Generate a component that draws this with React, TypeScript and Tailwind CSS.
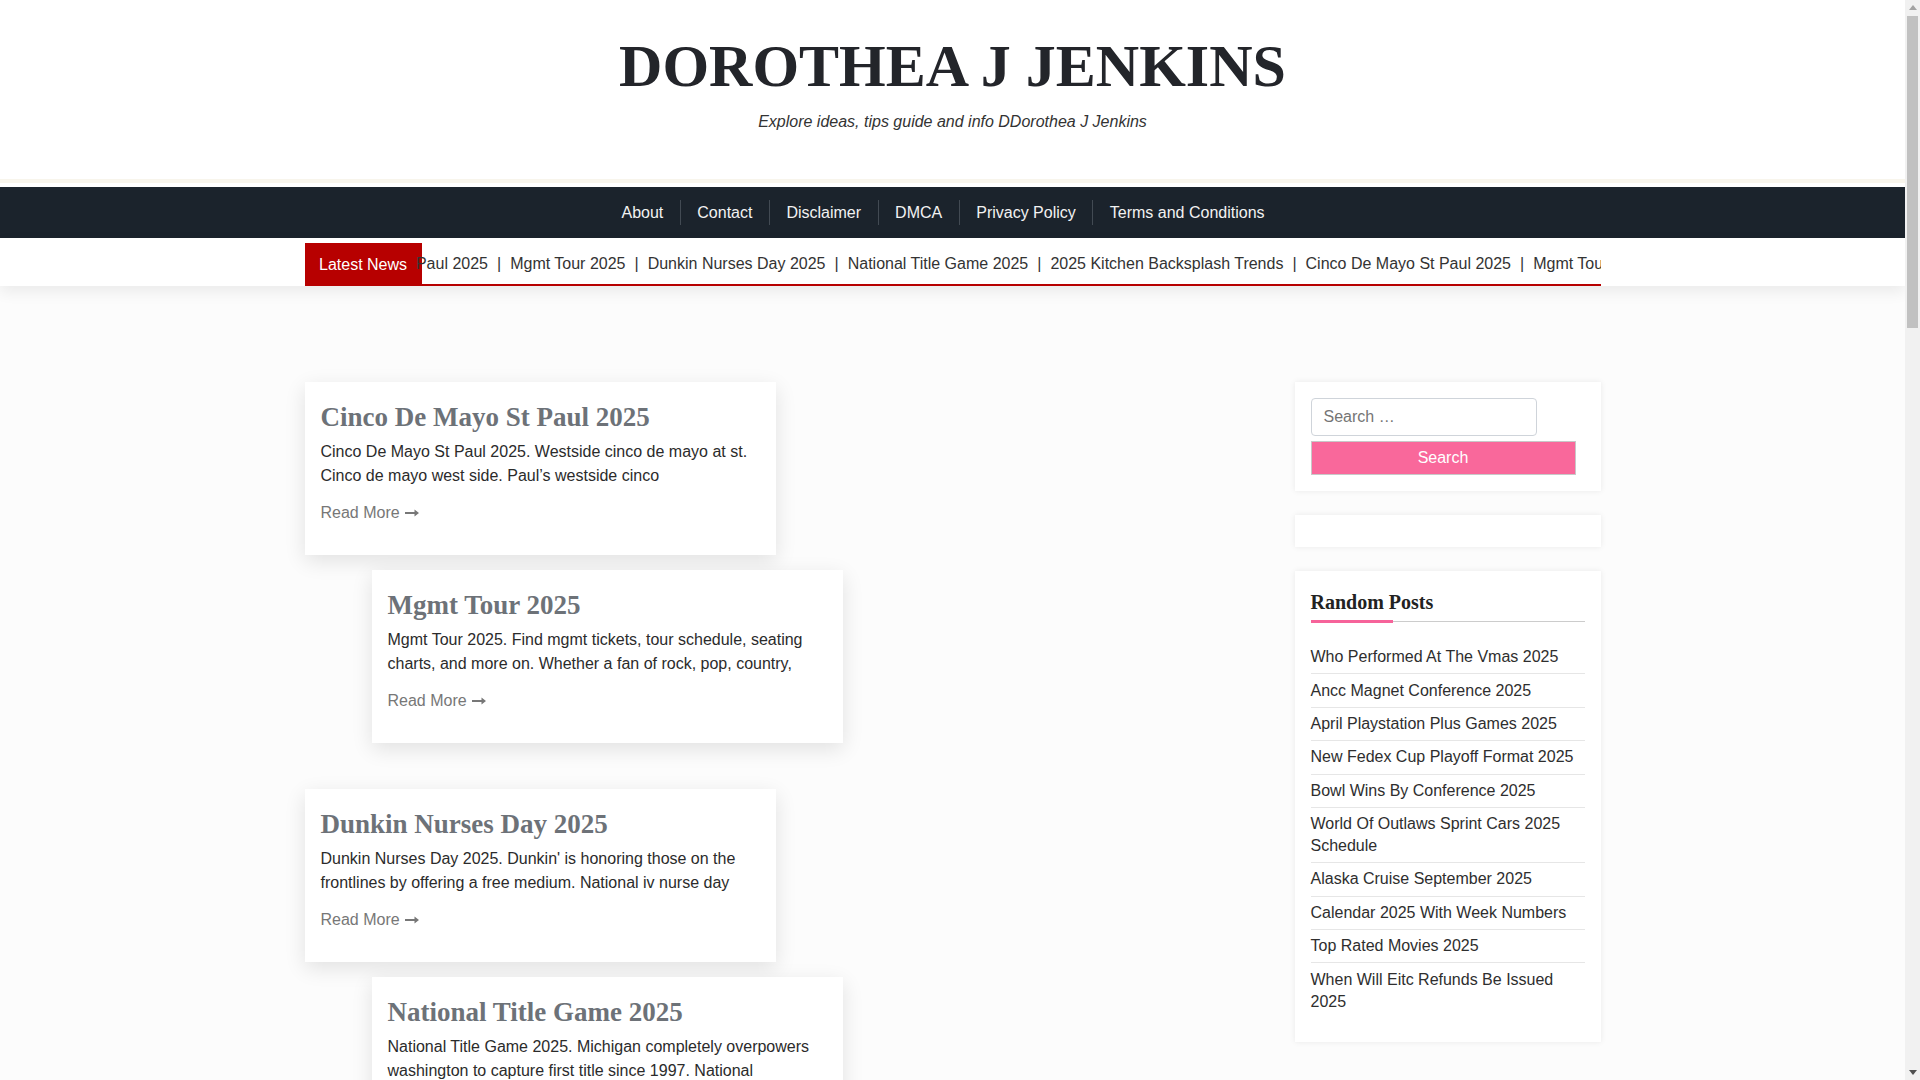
import React from "react";

const posts = [
  {
    title: "Cinco De Mayo St Paul 2025",
    excerpt:
      "Cinco De Mayo St Paul 2025. Westside cinco de mayo at st. Cinco de mayo west side. Paul’s westside cinco",
  },
  {
    title: "Mgmt Tour 2025",
    excerpt:
      "Mgmt Tour 2025. Find mgmt tickets, tour schedule, seating charts, and more on. Whether a fan of rock, pop, country,",
  },
  {
    title: "Dunkin Nurses Day 2025",
    excerpt:
      "Dunkin Nurses Day 2025. Dunkin' is honoring those on the frontlines by offering a free medium. National iv nurse day",
  },
  {
    title: "National Title Game 2025",
    excerpt:
      "National Title Game 2025. Michigan completely overpowers washington to capture first title since 1997. National",
  },
  {
    title: "2025 Kitchen Backsplash Trends",
    excerpt:
      "2025 Kitchen Backsplash Trends. Discover the latest tile ideas, colors and materials for your kitchen. From",
  },
  {
    title: "Who Performed At The Vmas 2025",
    excerpt:
      "Who Performed At The Vmas 2025. See the full list of artists who took the stage at the awards show. The",
  },
];

const randomPosts = [
  "Who Performed At The Vmas 2025",
  "Ancc Magnet Conference 2025",
  "April Playstation Plus Games 2025",
  "New Fedex Cup Playoff Format 2025",
  "Bowl Wins By Conference 2025",
  "World Of Outlaws Sprint Cars 2025 Schedule",
  "Alaska Cruise September 2025",
  "Calendar 2025 With Week Numbers",
  "Top Rated Movies 2025",
  "When Will Eitc Refunds Be Issued 2025",
];

const ticker = [
  "Cinco De Mayo St Paul 2025",
  "Mgmt Tour 2025",
  "Dunkin Nurses Day 2025",
  "National Title Game 2025",
  "2025 Kitchen Backsplash Trends",
  "Cinco De Mayo St Paul 2025",
  "Mgmt Tour 2025",
  "Dunkin Nurses Day 2025",
];

const menu = ["About", "Contact", "Disclaimer", "DMCA", "Privacy Policy", "Terms and Conditions"];

function Arrow() {
  return (
    <svg width="14" height="8" viewBox="0 0 14 8" className="ml-[5px] inline-block" fill="#777">
      <path d="M0 3h9.5V0.6L14 4l-4.5 3.4V5H0z" />
    </svg>
  );
}

function Card({ title, excerpt, shifted, first, gapSmall }: { title: string; excerpt: string; shifted: boolean; first: boolean; gapSmall: boolean }) {
  return (
    <article
      className={`${shifted ? "ml-[67px]" : "ml-0"} ${first ? "mt-0" : gapSmall ? "mt-[15px]" : "mt-[46px]"} w-[471px] bg-white px-[16px] pt-[19px] pb-[30px] shadow-[0_6px_20px_rgba(0,0,0,0.11)]`}
    >
      <h2 className="font-['Liberation_Serif',serif] text-[27px] font-bold leading-[1.2] text-[#6d7278] mb-[7px]">
        {title}
      </h2>
      <p className="text-[16px] leading-[23.3px] text-[#2b2b2b] mb-[14px]">{excerpt}</p>
      <a className="flex items-center text-[16px] leading-[24px] text-[#777]">
        Read More
        <Arrow />
      </a>
    </article>
  );
}

function Scrollbar() {
  return (
    <div className="flex h-full w-[15px] shrink-0 flex-col items-center bg-[#f1f1f1]">
      <div className="flex h-[15px] w-full items-center justify-center">
        <svg width="8" height="5" viewBox="0 0 8 5" fill="#a3a3a3">
          <path d="M4 0L8 5H0z" />
        </svg>
      </div>
      <div className="mt-[1px] h-[312px] w-[11px] bg-[#c1c1c1]" />
      <div className="flex-1" />
      <div className="flex h-[15px] w-full items-center justify-center">
        <svg width="8" height="5" viewBox="0 0 8 5" fill="#505050">
          <path d="M0 0H8L4 5z" />
        </svg>
      </div>
    </div>
  );
}

export default function App() {
  return (
    <div className="flex h-screen overflow-hidden font-['Liberation_Sans',Arial,sans-serif]">
      <div className="min-w-0 flex-1 overflow-hidden bg-[#fcfcfc]">
        {/* Header */}
        <header className="bg-white pt-[30px] pb-[45px] text-center">
          <h1 className="font-['Liberation_Serif',serif] text-[60px] font-bold leading-[1.2] text-[#23252a]">
            DOROTHEA J JENKINS
          </h1>
          <p className="mt-[8px] text-[16px] italic leading-[24px] text-[#333]">
            Explore ideas, tips guide and info DDorothea J Jenkins
          </p>
        </header>
        <div className="h-[4px] bg-[#f8f5ec]" />
        <div className="h-[4px] bg-white" />

        {/* Nav */}
        <nav className="flex h-[51px] items-center justify-center bg-[#1b232c]">
          <ul className="mr-[19px] flex items-center">
            {menu.map((m, i) => (
              <li
                key={m}
                className={`flex h-[25px] items-center px-[16.5px] text-[16px] text-[#f2f2f2] ${
                  i < menu.length - 1 ? "border-r border-[#424a53]" : ""
                }`}
              >
                {m}
              </li>
            ))}
          </ul>
        </nav>

        {/* Ticker */}
        <div className="bg-white pt-[5px] shadow-[0_6px_14px_rgba(0,0,0,0.07)]">
          <div className="mx-auto flex w-[1296px]">
            <div className="flex h-[43px] shrink-0 items-center whitespace-nowrap bg-[#b70000] px-[14.5px] text-[16px] text-white">
              Latest News
            </div>
            <div className="relative ml-[-5px] flex h-[43px] flex-1 items-center overflow-hidden border-b-[2px] border-[#b70000]">
              <div className="ml-[-134px] flex whitespace-nowrap text-[16px] text-[#333]">
                {ticker.map((t, i) => (
                  <span key={i} className="flex">
                    {i > 0 && <span className="mx-[9px]">|</span>}
                    <span>{t}</span>
                  </span>
                ))}
              </div>
            </div>
          </div>
        </div>

        {/* Main */}
        <main className="mx-auto flex w-[1296px] items-start justify-between pt-[96px] pb-[80px]">
          <div className="flex flex-col">
            {posts.map((p, i) => (
              <Card
                key={i}
                title={p.title}
                excerpt={p.excerpt}
                shifted={i % 2 === 1}
                first={i === 0}
                gapSmall={i % 2 === 1}
              />
            ))}
          </div>

          <aside className="flex w-[306px] flex-col gap-[24px]">
            <div className="bg-white p-[16px] shadow-[0_0_6px_rgba(0,0,0,0.08)]">
              <div className="flex h-[38px] w-[226px] items-center rounded-[4px] border border-[#cfd4da] px-[12px] text-[16px] text-[#757575]">
                Search …
              </div>
              <button className="mt-[5px] flex h-[34px] w-[265px] items-center justify-center border border-[#c8c8c8] bg-[#f9689b] text-[16px] text-white">
                Search
              </button>
            </div>
            <div className="h-[32px] bg-white shadow-[0_0_6px_rgba(0,0,0,0.08)]" />
            <div className="bg-white px-[16px] pt-[19px] pb-[24px] shadow-[0_0_6px_rgba(0,0,0,0.08)]">
              <div className="relative border-b border-[#cccccc] pb-[7px]">
                <h3 className="font-['Liberation_Serif',serif] text-[20px] font-bold leading-[24px] text-[#222]">
                  Random Posts
                </h3>
                <span className="absolute bottom-[-2px] left-0 h-[3px] w-[82px] bg-[#f6639a]" />
              </div>
              <ul className="mt-[19px]">
                {randomPosts.map((r, i) => (
                  <li
                    key={r}
                    className={`py-[5.2px] text-[16px] leading-[22px] text-[#2e2e2e] ${
                      i < randomPosts.length - 1 ? "border-b border-[#e6e6e6]" : ""
                    }`}
                  >
                    {r}
                  </li>
                ))}
              </ul>
            </div>
          </aside>
        </main>
      </div>
      <Scrollbar />
    </div>
  );
}
